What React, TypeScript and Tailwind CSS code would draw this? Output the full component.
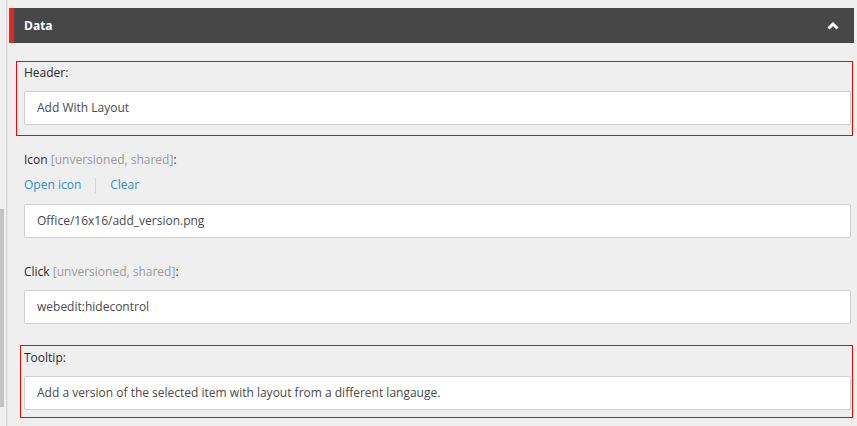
import React from "react";

const font = { fontFamily: '"Open Sans", "Segoe UI", Arial, sans-serif' };

function Label({ main, extra }: { main: string; extra?: string }) {
  return (
    <div className="h-[18px] leading-[18px] text-[12px] text-[#2b2b2b]">
      {main}
      {extra && <span className="text-[#9a9a9a]"> {extra}</span>}:
    </div>
  );
}

function Input({ value }: { value: string }) {
  return (
    <div className="h-[34px] bg-white border border-solid border-[#cfcfcf] rounded-[2px] pl-[12px] flex items-center text-[12px] text-[#4a4a4a]">
      {value}
    </div>
  );
}

export default function App() {
  return (
    <div
      className="w-[857px] h-[426px] bg-[#efefef] flex overflow-hidden"
      style={font}
    >
      <div className="w-[6px] shrink-0 flex flex-col">
        <div className="mt-[209px] w-[4px] h-[198px] bg-[#c3c3c3]" />
      </div>
      <div className="w-[1px] shrink-0 bg-[#d8d8d8]" />
      <div className="w-[1px] shrink-0 bg-[#e6e6e6]" />
      <div className="w-[846px] shrink-0 flex flex-col pt-[8px]">
        <div className="ml-[1px] h-[35px] bg-[#474747] border-l-[5px] border-solid border-l-[#e1261c] flex items-center justify-between pl-[10px] pr-[15px]">
          <span className="text-white font-bold text-[12px]">Data</span>
          <svg width="12" height="8" viewBox="0 0 12 8">
            <polyline
              points="1.5,6.5 6,2 10.5,6.5"
              fill="none"
              stroke="white"
              strokeWidth="3"
            />
          </svg>
        </div>

        <div className="mt-[18px] ml-[8px] mr-[1px] border border-solid border-[#ff0000] pl-[7px] pr-[1px] pt-[2px] pb-[10px]">
          <Label main="Header" />
          <div className="mt-[9px]">
            <Input value="Add With Layout" />
          </div>
        </div>

        <div className="ml-[16px] mr-[3px] flex flex-col">
          <div className="mt-[15px]">
            <Label main="Icon" extra="[unversioned, shared]" />
          </div>
          <div className="mt-[7px] h-[18px] flex items-center text-[12px] text-[#2b8fc6]">
            <span>Open icon</span>
            <span className="mx-[14px] w-px h-[15px] bg-[#d4d4d4]" />
            <span>Clear</span>
          </div>
          <div className="mt-[10px]">
            <Input value="Office/16x16/add_version.png" />
          </div>
          <div className="mt-[25px]">
            <Label main="Click" extra="[unversioned, shared]" />
          </div>
          <div className="mt-[9px]">
            <Input value="webedit:hidecontrol" />
          </div>
        </div>

        <div className="mt-[21px] ml-[12px] mr-[1px] border border-solid border-[#ff0000] pl-[3px] pr-[1px] pt-[3px] pb-[7px]">
          <Label main="Tooltip" />
          <div className="mt-[9px]">
            <Input value="Add a version of the selected item with layout from a different langauge." />
          </div>
        </div>
      </div>
    </div>
  );
}
